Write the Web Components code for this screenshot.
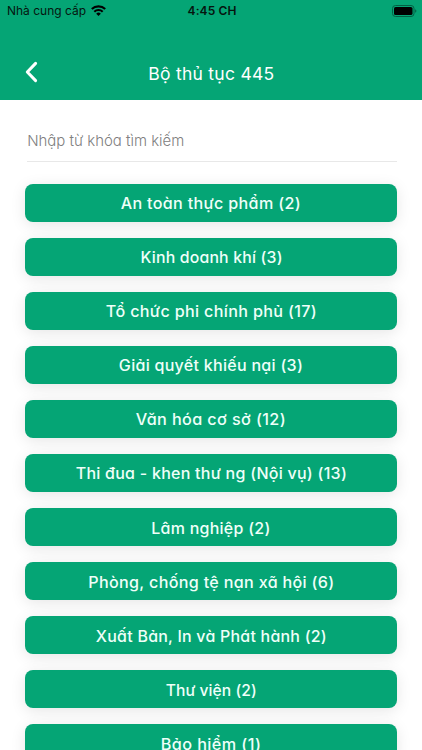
<!DOCTYPE html>
<html lang="vi">
<head>
<meta charset="UTF-8">
<title>Bộ thủ tục 445</title>
<style>
  body {
    margin: 0;
    height: 750px;
    overflow: hidden;
    background: #fff;
    font-family: Inter, "Noto Sans", sans-serif;
  }
</style>
</head>
<body>
<procedure-page>
  <status-bar slot="top"></status-bar>
  <page-header slot="top"><fit-text width="126">Bộ thủ tục 445</fit-text></page-header>
  <search-field><fit-text width="157">Nhập từ khóa tìm kiếm</fit-text></search-field>
  <procedure-list>
    <procedure-item><fit-text width="180">An toàn thực phẩm (2)</fit-text></procedure-item>
    <procedure-item><fit-text width="142">Kinh doanh khí (3)</fit-text></procedure-item>
    <procedure-item><fit-text width="211">Tổ chức phi chính phủ (17)</fit-text></procedure-item>
    <procedure-item><fit-text width="184">Giải quyết khiếu nại (3)</fit-text></procedure-item>
    <procedure-item><fit-text width="150">Văn hóa cơ sở (12)</fit-text></procedure-item>
    <procedure-item><fit-text width="271">Thi đua - khen thư ng (Nội vụ) (13)</fit-text></procedure-item>
    <procedure-item><fit-text width="119">Lâm nghiệp (2)</fit-text></procedure-item>
    <procedure-item><fit-text width="246">Phòng, chống tệ nạn xã hội (6)</fit-text></procedure-item>
    <procedure-item><fit-text width="231">Xuất Bản, In và Phát hành (2)</fit-text></procedure-item>
    <procedure-item><fit-text width="91">Thư viện (2)</fit-text></procedure-item>
    <procedure-item><fit-text width="100">Bảo hiểm (1)</fit-text></procedure-item>
  </procedure-list>
</procedure-page>

<script>
class ProcedurePage extends HTMLElement {
  constructor() {
    super()
    this.attachShadow({ mode: 'open' }).innerHTML = `
      <style>
        :host {
          display: flex;
          flex-direction: column;
          height: 750px;
          overflow: hidden;
        }
        header {
          flex: none;
          box-sizing: border-box;
          height: 100px;
          background: #05a575;
        }
        main {
          flex: 1;
          min-height: 0;
          padding: 0 25px;
        }
      </style>
      <header><slot name="top"></slot></header>
      <main><slot></slot></main>
    `
  }
}

class StatusBar extends HTMLElement {
  constructor() {
    super()
    this.attachShadow({ mode: 'open' }).innerHTML = `
      <style>
        :host {
          display: grid;
          grid-template-columns: 1fr auto 1fr;
          align-items: center;
          height: 21px;
          padding: 0 5px 0 7px;
          font-size: 12px;
          color: #06150f;
        }
        .carrier {
          display: flex;
          align-items: center;
          gap: 5px;
        }
        .time {
          font-weight: 600;
        }
        .battery {
          justify-self: end;
        }
        svg {
          display: block;
        }
      </style>
      <div class="carrier">
        <fit-text plain width="79">Nhà cung cấp</fit-text>
        <svg class="wifi" width="15" height="11" viewBox="0 0 15 11" fill="none" stroke="#000" stroke-width="2.1">
          <path d="M.8 4.1a9.5 9.5 0 0 1 13.4 0"/>
          <path d="M3.3 6.7a6 6 0 0 1 8.4 0"/>
          <path d="M7.5 11 5.2 8.7a3.3 3.3 0 0 1 4.6 0z" fill="#000" stroke="none"/>
        </svg>
      </div>
      <fit-text plain class="time" width="49">4:45 CH</fit-text>
      <svg class="battery" width="25" height="12" viewBox="0 0 25 12">
        <rect x=".5" y=".5" width="21.5" height="11" rx="3" fill="none" stroke="#036044"/>
        <rect x="2" y="2" width="18.5" height="8" rx="1.6" fill="#000"/>
        <path d="M23.2 4.2c1.6.6 1.6 3 0 3.6z" fill="#036044"/>
      </svg>
    `
  }
}

class PageHeader extends HTMLElement {
  constructor() {
    super()
    this.attachShadow({ mode: 'open' }).innerHTML = `
      <style>
        :host {
          display: grid;
          grid-template-columns: 1fr auto 1fr;
          align-items: center;
          height: 53px;
          padding: 26px 24px 0;
          color: #fff;
          font-size: 17px;
        }
        svg {
          display: block;
          margin-top: -3px;
        }
      </style>
      <svg width="14" height="22" viewBox="0 0 14 22" fill="none" stroke="#fff" stroke-width="3" stroke-linecap="round" stroke-linejoin="round">
        <path d="M11.6 2.4 3.3 11l8.3 8.6"/>
      </svg>
      <slot></slot>
    `
  }
}

class SearchField extends HTMLElement {
  constructor() {
    super()
    this.attachShadow({ mode: 'open' }).innerHTML = `
      <style>
        :host {
          display: flex;
          align-items: center;
          box-sizing: border-box;
          height: 43px;
          margin: 19px 0 0 2px;
          border-bottom: 1px solid #e8e8e8;
          color: #808080;
          font-size: 15px;
          font-weight: 300;
        }
      </style>
      <slot></slot>
    `
  }
}

class ProcedureList extends HTMLElement {
  constructor() {
    super()
    this.attachShadow({ mode: 'open' }).innerHTML = `
      <style>
        :host {
          display: flex;
          flex-direction: column;
          gap: 16.1px;
          margin-top: 21.5px;
        }
      </style>
      <slot></slot>
    `
  }
}

class ProcedureItem extends HTMLElement {
  constructor() {
    super()
    this.attachShadow({ mode: 'open' }).innerHTML = `
      <style>
        :host {
          display: flex;
          flex: none;
          align-items: center;
          justify-content: center;
          box-sizing: border-box;
          height: 38px;
          padding-top: 2px;
          border-radius: 8px;
          background: #05a575;
          box-shadow: 0 3px 15px rgba(0, 0, 0, .1);
          color: #effff9;
          font-size: 15.5px;
          font-weight: 450;
        }
      </style>
      <slot></slot>
    `
  }
}

// Spreads one line of text over a given width: wider letters first,
// letter spacing for the rest. "plain" keeps the letters as they are.
class FitText extends HTMLElement {
  constructor() {
    super()
    this.attachShadow({ mode: 'open' }).innerHTML = `
      <style>
        :host {
          display: flex;
          justify-content: center;
          white-space: nowrap;
        }
        :host(:not([plain])) {
          font-feature-settings: "cv11";
        }
        span {
          flex: none;
        }
      </style>
      <span><slot></slot></span>
    `
  }

  connectedCallback() {
    const span = this.shadowRoot.querySelector('span')
    const width = Number(this.getAttribute('width'))
    const natural = span.getBoundingClientRect().width
    const scale = this.hasAttribute('plain') ? 1 : Math.sqrt(width / natural)
    const spacing = (width / scale - natural) / (this.textContent.length - 1)
    this.style.width = `${width}px`
    span.style.letterSpacing = `${spacing}px`
    span.style.marginRight = `${-spacing}px`
    span.style.transform = scale === 1 ? 'none' : `scaleX(${scale})`
  }
}

customElements.define('procedure-page', ProcedurePage)
customElements.define('status-bar', StatusBar)
customElements.define('page-header', PageHeader)
customElements.define('search-field', SearchField)
customElements.define('procedure-list', ProcedureList)
customElements.define('procedure-item', ProcedureItem)
customElements.define('fit-text', FitText)
</script>
</body>
</html>
